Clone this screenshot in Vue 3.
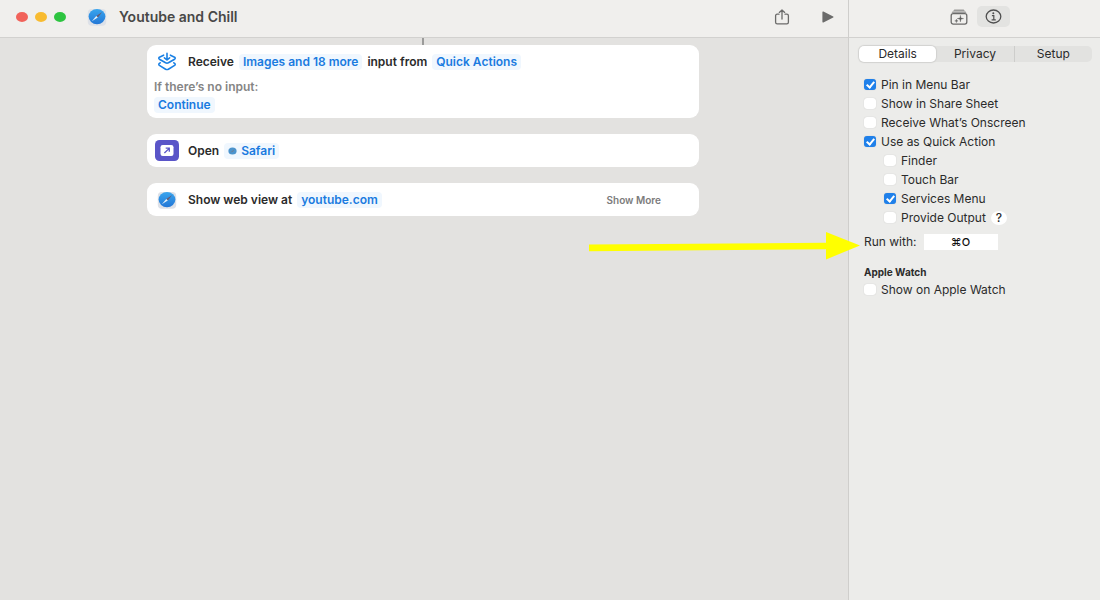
<template>
  <div class="window">
    <main class="editor">
      <header class="toolbar">
        <div class="traffic-lights">
          <button class="light close" aria-label="Close"></button>
          <button class="light minimize" aria-label="Minimize"></button>
          <button class="light zoom" aria-label="Zoom"></button>
        </div>
        <svg class="safari-icon" viewBox="0 0 20 20" aria-hidden="true">
          <use href="#safari" />
        </svg>
        <h1 class="title">Youtube and Chill</h1>
        <button class="tool share" aria-label="Share">
          <svg width="16" height="16" viewBox="0 0 16 16" fill="none" stroke="#6b6b6a" stroke-width="1.3" stroke-linecap="round" stroke-linejoin="round">
            <path d="M5 5.2H3.2Q1.6 5.2 1.6 6.8V13.2Q1.6 14.8 3.2 14.8H12.8Q14.4 14.8 14.4 13.2V6.8Q14.4 5.2 12.8 5.2H11" />
            <path d="M8 10V1M5.3 3.4L8 1L10.7 3.4" />
          </svg>
        </button>
        <button class="tool" aria-label="Run">
          <svg width="12" height="12" viewBox="0 0 12 12" fill="#6b6b6a">
            <path d="M.4 1.2Q.4.1 1.4.6L11.2 5.4Q12 6 11.2 6.6L1.4 11.4Q.4 11.9.4 10.8Z" />
          </svg>
        </button>
      </header>

      <div class="canvas">
        <div class="connector"></div>
        <section class="card receive">
          <div class="line">
            <svg class="action-icon" width="20" height="20" viewBox="0 0 20 20" fill="none" stroke="#1a80e4" stroke-width="1.6" stroke-linecap="round" stroke-linejoin="round">
              <path d="M6.6 3.2L2.4 5.2Q1.2 6.2 2.4 7.2L8.6 10.8Q10 11.5 11.4 10.8L17.6 7.2Q18.8 6.2 17.6 5.2L13.4 3.2" />
              <path d="M10 1.4V7.8M7.4 5.8L10 8L12.6 5.8" />
              <path d="M3.2 10.8L2.4 11.4Q1.2 12.4 2.4 13.4L8.6 17.2Q10 17.9 11.4 17.2L17.6 13.4Q18.8 12.4 17.6 11.4L16.8 10.8" />
            </svg>
            <span>Receive</span>
            <button class="token">Images and 18 more</button>
            <span>input from</span>
            <button class="token">Quick Actions</button>
          </div>
          <p class="hint">If there’s no input:</p>
          <button class="token">Continue</button>
        </section>

        <section class="card line">
          <svg class="action-icon open-icon" width="24" height="21" viewBox="0 0 24 21" aria-hidden="true">
            <rect width="24" height="21" rx="4.5" fill="#5a55c8" />
            <rect x="5.5" y="5" width="13" height="11" rx="2.2" fill="#fff" />
            <path d="M9.4 13L14 8.6M10.7 8.2H14.3V11.8" fill="none" stroke="#5a55c8" stroke-width="1.3" />
          </svg>
          <span>Open</span>
          <button class="token">
            <svg width="9" height="8" viewBox="0 0 9 8">
              <ellipse cx="4.5" cy="4" rx="4.1" ry="3.5" fill="#4c94cd" />
              <path d="M2.3 5.6L5.3 3.1L6.7 2.3L4.9 4.7Z" fill="#6d7d90" />
            </svg>
            Safari
          </button>
        </section>

        <section class="card line">
          <svg class="action-icon" width="20" height="20" viewBox="0 0 20 20" aria-hidden="true">
            <use href="#safari" />
          </svg>
          <span>Show web view at</span>
          <button class="token">youtube.com</button>
          <button class="show-more">Show More</button>
        </section>
      </div>
    </main>

    <aside class="sidebar">
      <header class="toolbar side-toolbar">
        <button class="tool-tile" aria-label="Action Library">
          <svg width="18" height="16" viewBox="0 0 18 16" fill="none" stroke="#6b6b6a" stroke-width="1.3">
            <path d="M4.3 .6H13.7L14.8 2H3.2Z" fill="#9b9b9a" stroke="none" />
            <path d="M2.6 2.4H15.4L16.4 3.8H1.6Z" fill="#858584" stroke="none" />
            <rect x="1.2" y="4.7" width="15.6" height="10.4" rx="2" />
            <path d="M10.4 6.2L11 9L13.7 9.6L11 10.2L10.4 13L9.8 10.2L7.1 9.6L9.8 9ZM6.4 10.1L6.8 11.5L8.1 11.9L6.8 12.3L6.4 13.7L6 12.3L4.7 11.9L6 11.5Z" fill="#5c5c5b" stroke="#5c5c5b" stroke-width=".3" />
          </svg>
        </button>
        <button class="tool-tile active" aria-label="Shortcut Details">
          <svg width="17" height="15" viewBox="0 0 17 15">
            <ellipse cx="8.5" cy="7.5" rx="7.3" ry="6.5" fill="none" stroke="#505050" stroke-width="1.3" />
            <circle cx="8.3" cy="4.3" r="1" fill="#505050" />
            <path d="M6.9 6.6H8.8V10.7M6.6 10.8H10.8" fill="none" stroke="#505050" stroke-width="1.2" />
          </svg>
        </button>
      </header>

      <nav class="tabs">
        <button
          v-for="tab in tabs"
          :key="tab"
          class="tab"
          :class="{ selected: tab === activeTab }"
          @click="activeTab = tab"
        >
          {{ tab }}
        </button>
      </nav>

      <div class="options">
        <div v-for="option in options" :key="option.label" class="option" :class="{ nested: option.nested }">
          <label class="check">
            <input v-model="option.checked" type="checkbox" />
            {{ option.label }}
          </label>
          <button v-if="option.help" class="help" aria-label="Help">?</button>
        </div>
      </div>

      <div class="run-with">
        <label for="hotkey">Run with:</label>
        <input id="hotkey" v-model="hotkey" type="text" />
      </div>

      <h2 class="section-title">Apple Watch</h2>
      <div class="option">
        <label class="check">
          <input v-model="showOnWatch" type="checkbox" />
          Show on Apple Watch
        </label>
      </div>
    </aside>

    <svg class="arrow" width="272" height="30" viewBox="0 0 272 30" aria-hidden="true">
      <path d="M1 13.4L238 11.8V1L272 14.6L238 28.4V18.2L1 20.2Z" fill="#ff0" />
    </svg>

    <svg class="defs" width="0" height="0" aria-hidden="true">
      <defs>
        <linearGradient id="dial" x1="0" y1="0" x2="0" y2="1">
          <stop offset="0" stop-color="#39a5ee" />
          <stop offset="1" stop-color="#2377d6" />
        </linearGradient>
        <symbol id="safari" viewBox="0 0 20 20">
          <rect x=".8" y="2" width="18.4" height="16.8" rx="4" fill="#dde1e8" />
          <ellipse cx="10" cy="9.6" rx="8.4" ry="7.6" fill="url(#dial)" />
          <path d="M15.2 5L10.8 10.6L9.3 9Z" fill="#6a5b70" />
          <path d="M4.8 14.2L9.3 9L10.8 10.6Z" fill="#e6f1fb" />
        </symbol>
      </defs>
    </svg>
  </div>
</template>

<script setup>
import { ref } from 'vue';

const tabs = ['Details', 'Privacy', 'Setup'];
const activeTab = ref('Details');

const options = ref([
  { label: 'Pin in Menu Bar', checked: true },
  { label: 'Show in Share Sheet', checked: false },
  { label: 'Receive What’s Onscreen', checked: false },
  { label: 'Use as Quick Action', checked: true },
  { label: 'Finder', checked: false, nested: true },
  { label: 'Touch Bar', checked: false, nested: true },
  { label: 'Services Menu', checked: true, nested: true },
  { label: 'Provide Output', checked: false, nested: true, help: true },
]);

const hotkey = ref('⌘O');
const showOnWatch = ref(false);
</script>

<style>
body {
  margin: 0;
  background: #e3e2e0;
}
</style>

<style scoped>
.window {
  position: relative;
  display: flex;
  min-height: 100vh;
  font-family: Inter, "Liberation Sans", "DejaVu Sans", sans-serif;
  font-size: 12px;
  line-height: 16px;
  color: #2b2b2b;
}

button,
input {
  font: inherit;
  color: inherit;
  margin: 0;
  padding: 0;
  border: none;
  background: none;
}

svg {
  display: block;
  flex: none;
}

.editor {
  flex: 1;
  min-width: 0;
  background: #e3e2e0;
}

.toolbar {
  display: flex;
  align-items: center;
  box-sizing: border-box;
  height: 38px;
  padding: 0 14px 4px 16px;
  background: #f0efed;
  border-bottom: 1px solid #d2d1cf;
}

.traffic-lights {
  display: flex;
  gap: 7px;
  margin-right: 21px;
}

.light {
  width: 12px;
  height: 10px;
  border-radius: 50%;
}

.close { background: #f1625a; }
.minimize { background: #f8bb30; }
.zoom { background: #2dc440; }

.safari-icon {
  width: 20px;
  height: 20px;
}

.title {
  flex: 1;
  margin: 0 0 0 12px;
  font-size: 14px;
  font-weight: 600;
  color: #484847;
}

.share {
  margin-right: 32px;
}

.canvas {
  display: flex;
  flex-direction: column;
  gap: 16px;
  padding: 0 149px 0 147px;
}

.connector {
  align-self: center;
  width: 2px;
  height: 7px;
  margin-bottom: -16px;
  background: #9b9b9a;
}

.card {
  box-sizing: border-box;
  min-height: 33px;
  padding: 0 8px;
  background: #fff;
  border-radius: 9px;
  font-weight: 600;
}

.receive {
  padding: 7px 7px 5px;
}

.line {
  display: flex;
  align-items: center;
  gap: 5px;
}

.receive .line {
  padding: 0 1px;
}

.action-icon {
  margin: 0 6px 0 2px;
}

.open-icon {
  margin: 0 4px 0 0;
}

.token {
  display: inline-flex;
  align-items: center;
  gap: 4px;
  padding: 0 4px;
  border-radius: 4px;
  background: #f0f7fe;
  color: #1a7be0;
}

.hint {
  margin: 7px 0 2px;
  color: #858585;
}

.show-more {
  margin: 0 30px 0 auto;
  font-size: 10px;
  color: #7c7c7c;
}

.sidebar {
  box-sizing: border-box;
  width: 252px;
  background: #ececea;
  border-left: 1px solid #cfcecc;
}

.side-toolbar {
  justify-content: center;
  gap: 2px;
  padding: 0 12px 4px 15px;
}

.tool-tile {
  display: grid;
  place-items: center;
  width: 33px;
  height: 21px;
  border-radius: 5px;
}

.tool-tile.active {
  background: #e3e3e1;
}

.tabs {
  display: flex;
  margin: 8px 8px 0 10px;
  background: #e2e2e0;
  border-radius: 5px;
}

.tab {
  flex: 1;
  height: 16px;
  border-radius: 5px;
}

.tab.selected {
  background: #fff;
  box-shadow: 0 0 1px 1px #d2d2d0;
}

.tab:last-child {
  border-left: 1px solid #cdcdcb;
  border-radius: 0;
}

.options {
  padding-top: 13px;
}

.option {
  display: flex;
  align-items: center;
  height: 19px;
  padding-left: 15px;
}

.nested {
  padding-left: 35px;
}

.check {
  display: flex;
  align-items: center;
  gap: 5px;
}

.check input {
  display: grid;
  place-items: center;
  appearance: none;
  width: 12px;
  height: 11px;
  border-radius: 3px;
  background: #fff;
  box-shadow: 0 0 1px #b9b9b7;
}

.check input:checked {
  background: #1f80ea;
}

.check input:checked::after {
  content: "";
  width: 3px;
  height: 6px;
  margin-bottom: 2px;
  border: solid #fff;
  border-width: 0 2px 2px 0;
  transform: rotate(40deg);
}

.help {
  width: 16px;
  height: 14px;
  margin-left: 5px;
  border-radius: 50%;
  background: #fff;
  font-weight: 500;
  line-height: 14px;
}

.run-with {
  display: flex;
  align-items: center;
  gap: 7px;
  margin: 7px 0 0 15px;
}

.run-with input {
  width: 74px;
  height: 16px;
  background: #fff;
  color: #111;
  font-size: 11px;
  font-weight: 500;
  text-align: center;
}

.section-title {
  margin: 14px 0 0 15px;
  font-size: 10px;
  font-weight: 700;
}

.arrow {
  position: absolute;
  top: 231px;
  right: 240px;
}

.defs {
  position: absolute;
}
</style>
